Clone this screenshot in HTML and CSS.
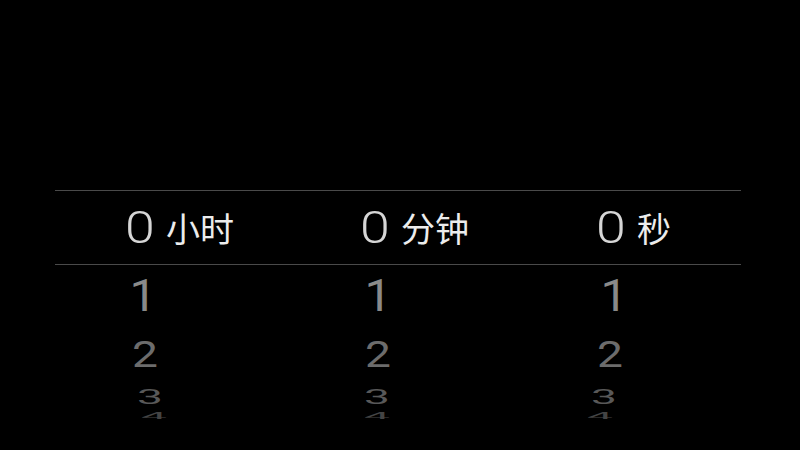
FILE: index.html
```html
<!DOCTYPE html>
<html lang="zh-CN">
<head>
<meta charset="utf-8">
<title>计时器</title>
<link rel="stylesheet" href="styles.css">
</head>
<body>
<div class="picker">
  <div class="band">
    <div class="row sel">
      <div class="col c1"><span class="num">0</span><span class="unit">小时</span></div>
      <div class="col c2"><span class="num">0</span><span class="unit">分钟</span></div>
      <div class="col c3"><span class="num">0</span><span class="unit">秒</span></div>
    </div>
  </div>
  <div class="row r1">
    <div class="col c1"><span class="num">1</span></div>
    <div class="col c2"><span class="num">1</span></div>
    <div class="col c3"><span class="num">1</span></div>
  </div>
  <div class="row r2">
    <div class="col c1"><span class="num">2</span></div>
    <div class="col c2"><span class="num">2</span></div>
    <div class="col c3"><span class="num">2</span></div>
  </div>
  <div class="row r3">
    <div class="col c1"><span class="num">3</span></div>
    <div class="col c2"><span class="num">3</span></div>
    <div class="col c3"><span class="num">3</span></div>
  </div>
  <div class="row r4">
    <div class="col c1"><span class="num">4</span></div>
    <div class="col c2"><span class="num">4</span></div>
    <div class="col c3"><span class="num">4</span></div>
  </div>
</div>
</body>
</html>
```
FILE: styles.css
```css
html, body {
  margin: 0;
  padding: 0;
  background: #000;
  width: 800px;
  height: 450px;
  overflow: hidden;
  font-family: Roboto, "Noto Sans CJK SC", sans-serif;
}

.picker {
  margin: 190px 0 0 55px;
  width: 686px;
}

.band {
  border-top: 1px solid #4a4a4a;
  border-bottom: 1px solid #4a4a4a;
  height: 73px;
  display: flex;
  align-items: center;
}

.row {
  display: grid;
  grid-template-columns: 235px 236px 1fr;
  padding-left: 60px;
  align-items: center;
  width: 100%;
  box-sizing: border-box;
}

.col {
  display: flex;
  align-items: center;
}

.num {
  display: block;
  width: 50px;
  text-align: center;
  font-family: Roboto, sans-serif;
  font-weight: 300;
  font-size: 44px;
  line-height: 1;
}

.unit {
  display: block;
  font-family: "Noto Sans CJK SC", sans-serif;
  font-size: 34px;
  line-height: 1;
  color: #ececec;
  margin-left: 1px;
}

.sel {
  height: 73px;
  color: #d6d6d6;
}

.sel .num {
  transform: scaleX(1.22);
}

.r1 { height: 61px; color: #8a8a8a; }
.r2 { height: 55px; color: #6c6c6c; transform: scaleY(0.85); }
.r3 { height: 27px; color: #585858; transform: translateY(-2px) scaleY(0.47); }
.r4 { height: 11px; color: #444; transform: translateY(-1px) scaleY(0.22); }

.r1 .num { transform: translateX(3px) scaleX(1.1); }
.r1 .num, .r2 .num, .r3 .num, .r4 .num {
  font-weight: 400;
}

.r2 .c1 .num { transform: translateX(5px) scaleX(1.05); }
.r2 .c2 .num { transform: translateX(3px) scaleX(1.05); }
.r2 .c3 .num { transform: translateX(-1px) scaleX(1.05); }
.r3 .c1 .num { transform: translateX(10px) scaleX(1.05); }
.r3 .c2 .num { transform: translateX(2px) scaleX(1.05); }
.r3 .c3 .num { transform: translateX(-7px) scaleX(1.05); }
.r4 .c1 .num { transform: translateX(14px) scaleX(1.05); }
.r4 .c2 .num { transform: translateX(2px) scaleX(1.05); }
.r4 .c3 .num { transform: translateX(-11px) scaleX(1.05); }
```
